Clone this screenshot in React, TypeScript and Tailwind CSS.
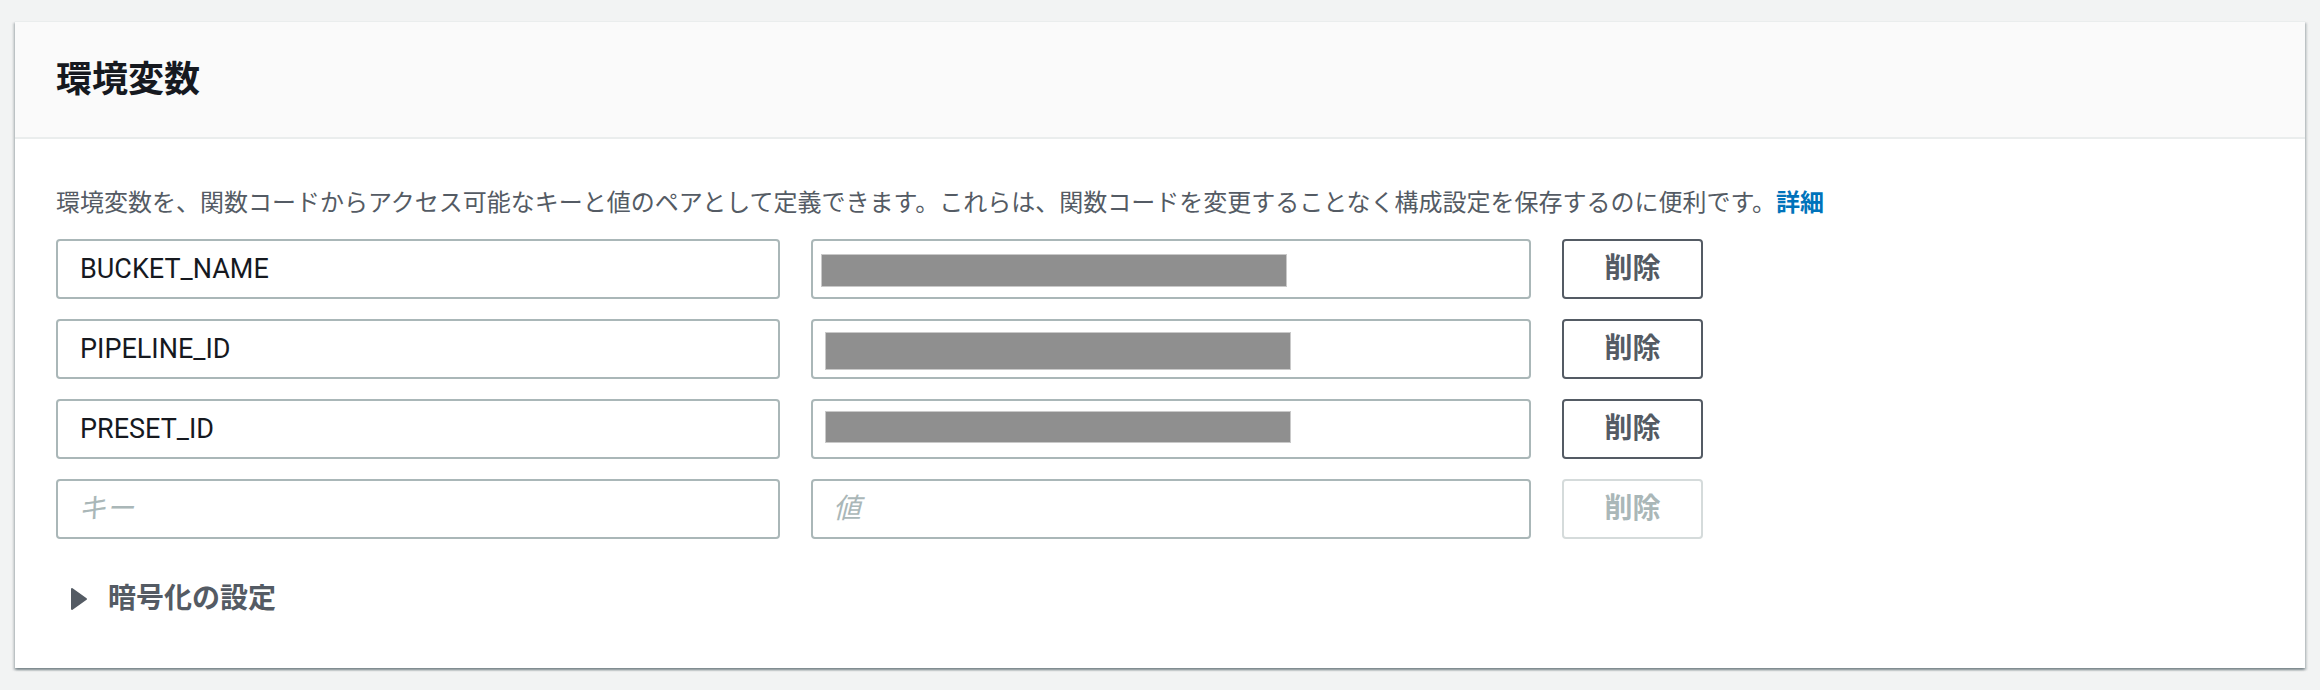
import React from 'react'

const rows = [
  { key: 'BUCKET_NAME', redact: 'ml-[8px] mt-[3px] h-[33px] w-[466px]' },
  { key: 'PIPELINE_ID', redact: 'ml-[12px] mt-[4px] h-[38px] w-[466px]' },
  { key: 'PRESET_ID', redact: 'ml-[12px] -mt-[4px] h-[32px] w-[466px]' },
]

const font = 'font-[Roboto,"Noto_Sans_CJK_JP",sans-serif]'

function Caret() {
  return (
    <svg width="18" height="24" viewBox="0 0 18 24" className="shrink-0">
      <path d="M2 2 L16 12 L2 22 Z" fill="#545b64" stroke="#545b64" strokeWidth="2" strokeLinejoin="round" />
    </svg>
  )
}

export default function App() {
  return (
    <div className={`min-h-[690px] w-[2320px] bg-[#f2f3f3] pl-[15px] pt-[21px] ${font}`}>
      <div className="w-[2290px] border-t border-[#eaeded] bg-white shadow-[0_2px_2px_0_rgba(0,28,36,0.3),2px_2px_2px_0_rgba(0,28,36,0.15),-2px_2px_2px_0_rgba(0,28,36,0.15)]">
        {/* Header */}
        <div className="flex h-[117px] items-center border-b-2 border-[#eaeded] bg-[#fafafa] pl-[41px]">
          <h2 className="text-[36px] font-bold leading-[44px] text-[#16191f]">環境変数</h2>
        </div>

        {/* Body */}
        <div className="pb-[51px] pl-[41px] pt-[48px]">
          <p className="text-[24px] leading-[32px] text-[#545b64]">
            環境変数を、関数コードからアクセス可能なキーと値のペアとして定義できます。これらは、関数コードを変更することなく構成設定を保存するのに便利です。
            <a className="font-bold text-[#0073bb]">詳細</a>
          </p>

          <div className="mt-[20px] flex flex-col gap-[20px]">
            {rows.map((row) => (
              <div key={row.key} className="flex items-center gap-[31px]">
                <div className="flex h-[60px] w-[724px] items-center rounded-[4px] border-2 border-[#aab7b8] pl-[22px] text-[27px] text-[#16191f]">
                  {row.key}
                </div>
                <div className="flex h-[60px] w-[720px] items-center rounded-[4px] border-2 border-[#aab7b8]">
                  <div className={`border border-[#c9c9c9] bg-[#8f8f8f] ${row.redact}`} />
                </div>
                <button className="h-[60px] w-[141px] rounded-[4px] border-2 border-[#545b64] bg-white text-[28px] font-bold text-[#545b64]">
                  削除
                </button>
              </div>
            ))}
            <div className="flex items-center gap-[31px]">
              <div className="flex h-[60px] w-[724px] items-center rounded-[4px] border-2 border-[#aab7b8] pl-[20px] text-[28px] italic text-[#aab7b8]">
                キー
              </div>
              <div className="flex h-[60px] w-[720px] items-center rounded-[4px] border-2 border-[#aab7b8] pl-[20px] text-[28px] italic text-[#aab7b8]">
                値
              </div>
              <button disabled className="h-[60px] w-[141px] rounded-[4px] border-2 border-[#d5dbdb] bg-white text-[28px] font-bold text-[#aab7b8]">
                削除
              </button>
            </div>
          </div>

          {/* Encryption settings */}
          <div className="mt-[42px] flex h-[36px] items-center gap-[20px] pl-[14px]">
            <Caret />
            <span className="text-[28px] font-bold leading-[36px] text-[#545b64]">暗号化の設定</span>
          </div>
        </div>
      </div>
    </div>
  )
}
